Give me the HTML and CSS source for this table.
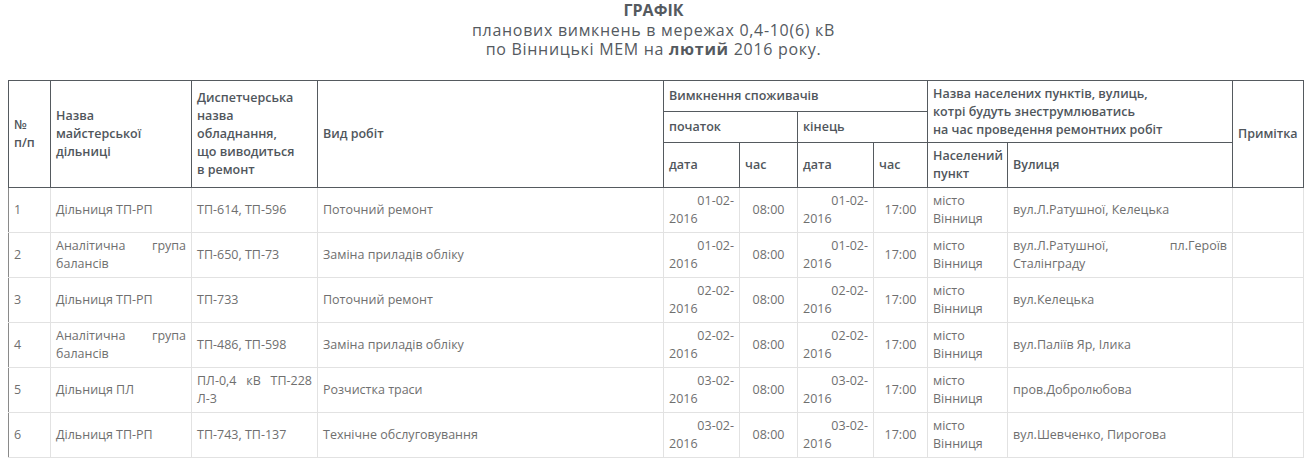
FILE: index.html
```html
<!DOCTYPE html>
<html lang="uk">
<head>
<meta charset="utf-8">
<title>Графік</title>
<link rel="stylesheet" href="styles.css">
</head>
<body>
<div class="title">
  <div class="t1">ГРАФІК</div>
  <div class="t2">планових вимкнень в мережах 0,4-10(6) кВ</div>
  <div class="t2">по Вінницькі МЕМ на <b>лютий</b> 2016 року.</div>
</div>
<table class="grid">
  <colgroup>
    <col class="c1"><col class="c2"><col class="c3"><col class="c4">
    <col class="c5"><col class="c6"><col class="c7"><col class="c8">
    <col class="c9"><col class="c10"><col class="c11">
  </colgroup>
  <thead>
    <tr class="h1">
      <th rowspan="3">№<br>п/п</th>
      <th rowspan="3">Назва<br>майстерської<br>дільниці</th>
      <th rowspan="3">Диспетчерська<br>назва<br>обладнання,<br>що виводиться<br>в ремонт</th>
      <th rowspan="3">Вид робіт</th>
      <th colspan="4">Вимкнення споживачів</th>
      <th colspan="2" rowspan="2">Назва населених пунктів, вулиць,<br>котрі будуть знеструмлюватись<br>на час проведення ремонтних робіт</th>
      <th rowspan="3">Примітка</th>
    </tr>
    <tr class="h2">
      <th colspan="2">початок</th>
      <th colspan="2">кінець</th>
    </tr>
    <tr class="h3">
      <th>дата</th>
      <th>час</th>
      <th>дата</th>
      <th>час</th>
      <th>Населений пункт</th>
      <th>Вулиця</th>
    </tr>
  </thead>
  <tbody>
    <tr>
      <td>1</td><td class="j">Дільниця ТП-РП</td><td class="j">ТП-614, ТП-596</td><td>Поточний ремонт</td>
      <td class="d"><span class="dl1">01-02-</span><span class="dl2">2016</span></td><td class="c">08:00</td>
      <td class="d"><span class="dl1">01-02-</span><span class="dl2">2016</span></td><td class="c">17:00</td>
      <td>місто<br>Вінниця</td><td class="j">вул.Л.Ратушної, Келецька</td><td></td>
    </tr>
    <tr>
      <td>2</td><td class="j">Аналітична група балансів</td><td class="j">ТП-650, ТП-73</td><td>Заміна приладів обліку</td>
      <td class="d"><span class="dl1">01-02-</span><span class="dl2">2016</span></td><td class="c">08:00</td>
      <td class="d"><span class="dl1">01-02-</span><span class="dl2">2016</span></td><td class="c">17:00</td>
      <td>місто<br>Вінниця</td><td class="j">вул.Л.Ратушної, пл.Героїв Сталінграду</td><td></td>
    </tr>
    <tr>
      <td>3</td><td class="j">Дільниця ТП-РП</td><td class="j">ТП-733</td><td>Поточний ремонт</td>
      <td class="d"><span class="dl1">02-02-</span><span class="dl2">2016</span></td><td class="c">08:00</td>
      <td class="d"><span class="dl1">02-02-</span><span class="dl2">2016</span></td><td class="c">17:00</td>
      <td>місто<br>Вінниця</td><td class="j">вул.Келецька</td><td></td>
    </tr>
    <tr>
      <td>4</td><td class="j">Аналітична група балансів</td><td class="j">ТП-486, ТП-598</td><td>Заміна приладів обліку</td>
      <td class="d"><span class="dl1">02-02-</span><span class="dl2">2016</span></td><td class="c">08:00</td>
      <td class="d"><span class="dl1">02-02-</span><span class="dl2">2016</span></td><td class="c">17:00</td>
      <td>місто<br>Вінниця</td><td class="j">вул.Паліїв Яр, Ілика</td><td></td>
    </tr>
    <tr>
      <td>5</td><td class="j">Дільниця ПЛ</td><td class="j">ПЛ-0,4 кВ ТП-228 Л-3</td><td>Розчистка траси</td>
      <td class="d"><span class="dl1">03-02-</span><span class="dl2">2016</span></td><td class="c">08:00</td>
      <td class="d"><span class="dl1">03-02-</span><span class="dl2">2016</span></td><td class="c">17:00</td>
      <td>місто<br>Вінниця</td><td class="j">пров.Добролюбова</td><td></td>
    </tr>
    <tr>
      <td>6</td><td class="j">Дільниця ТП-РП</td><td class="j">ТП-743, ТП-137</td><td>Технічне обслуговування</td>
      <td class="d"><span class="dl1">03-02-</span><span class="dl2">2016</span></td><td class="c">08:00</td>
      <td class="d"><span class="dl1">03-02-</span><span class="dl2">2016</span></td><td class="c">17:00</td>
      <td>місто<br>Вінниця</td><td class="j">вул.Шевченко, Пирогова</td><td></td>
    </tr>
  </tbody>
</table>
</body>
</html>
```

FILE: styles.css
```css
html, body {
  margin: 0;
  padding: 0;
  background: #fff;
}
body {
  padding: 0 8px;
  font-family: "Open Sans", "Liberation Sans", sans-serif;
  color: #6f6f6f;
}
.title {
  text-align: center;
  color: #555a5f;
  font-size: 16px;
  line-height: 19.5px;
  padding-top: 1px;
  height: 79px;
}
.t1 {
  font-weight: 700;
}
.t2 {
  letter-spacing: 0.7px;
}
.t2 b {
  font-weight: 700;
}
.grid {
  border-collapse: collapse;
  table-layout: fixed;
  width: 1295px;
  font-size: 12.5px;
  line-height: 18px;
  border-left: 1px solid #8a8a8a;
  border-right: 1px solid #8a8a8a;
}
.c1 { width: 42px; }
.c2 { width: 141px; }
.c3 { width: 126px; }
.c4 { width: 346px; }
.c5 { width: 76px; }
.c6 { width: 58px; }
.c7 { width: 76px; }
.c8 { width: 54px; }
.c9 { width: 80px; }
.c10 { width: 225px; }
.c11 { width: 71px; }
.grid th {
  border: 1px solid #555a5f;
  color: #50565c;
  font-weight: 600;
  text-align: left;
  vertical-align: middle;
  padding: 0 5px;
}
.grid thead tr.h1 { height: 31px; }
.grid thead tr.h2 { height: 31px; }
.grid thead tr.h3 { height: 45px; }
.grid td {
  border: 1px solid #e2e2e2;
  vertical-align: middle;
  padding: 0 5px;
  height: 44px;
}
.grid tbody tr td:first-child {
  border-left: 1px solid #8a8a8a;
}
.grid td.j {
  text-align: justify;
}
.grid td.c {
  text-align: center;
}
.dl1 {
  display: block;
  text-align: right;
}
.dl2 {
  display: block;
  text-align: left;
}
```
